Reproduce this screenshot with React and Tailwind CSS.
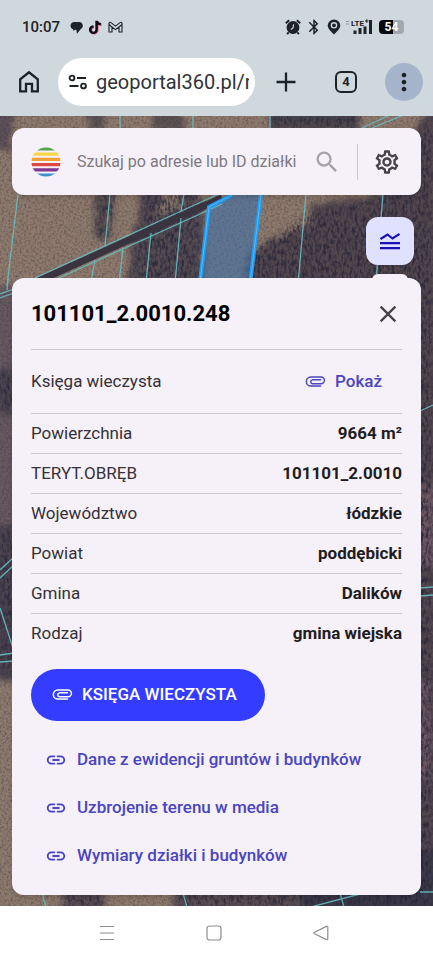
import { useState } from "react";
import { MdBluetooth, MdClose, MdLink, MdMoreVert, MdOutlineSettings, MdSearch } from "react-icons/md";

const details = [
  { label: "Powierzchnia", value: "9664 m²" },
  { label: "TERYT.OBRĘB", value: "101101_2.0010" },
  { label: "Województwo", value: "łódzkie" },
  { label: "Powiat", value: "poddębicki" },
  { label: "Gmina", value: "Dalików" },
  { label: "Rodzaj", value: "gmina wiejska" },
];

const links = [
  "Dane z ewidencji gruntów i budynków",
  "Uzbrojenie terenu w media",
  "Wymiary działki i budynków",
];

function ClipIcon() {
  return (
    <svg viewBox="0 0 22 12" className="h-[11px] w-[21px] shrink-0" fill="none" stroke="currentColor" strokeWidth="1.6" strokeLinecap="round">
      <path d="M16.500 11H6A5 5 0 0 1 6 1H17a3.700 3.700 0 0 1 0 7.500H7.500a2.200 2.200 0 0 1 0-4.300H16.500" />
    </svg>
  );
}

function StatusBar() {
  return (
    <div className="flex h-[54px] items-center justify-between pl-[22px] pr-[29px] text-[#1d2226]">
      <div className="flex items-center gap-1.5">
        <span className="mr-1 text-[15px] font-medium">10:07</span>
        <svg viewBox="0 0 12 12" className="h-[13px] w-[13px]" fill="currentColor">
          <path d="M3.400 1h5A3.400 3.400 0 0 1 9.800 7.500L6.400 11.700 5.900 8H4.600L3.200 9.200 3 7.800A3.500 3.500 0 0 1 3.400 1z" />
        </svg>
        <svg viewBox="0 0 12 14" className="h-[15px] w-[13px]" fill="none" strokeWidth="2.3">
          <path d="M7.700 1v8.400a3 3 0 1 1-3-3M7.700 1.200c.4 2.100 1.700 3 4 3.200" stroke="#e5587b" />
          <path d="M7 .6V9a3 3 0 1 1-3-3M7 .8c.4 2.100 1.700 3 4 3.200" stroke="#080c10" />
        </svg>
        <svg viewBox="0 0 15 12" className="h-3 w-[15px]" fill="none" stroke="currentColor" strokeWidth="1.100" strokeLinejoin="round">
          <path d="M1 11V2.100Q1.500.7 3 1.600l4.500 3.500L12 1.600q1.500-.9 2 .5V11h-3V6L7.500 8.600 4 6v5zM4 6 1 3.500M11 6l3-2.500" />
        </svg>
      </div>
      <div className="flex items-center gap-1">
        <svg viewBox="0 0 16 16" className="h-4 w-4" fill="none" stroke="currentColor">
          <circle cx="8" cy="8.500" r="6.400" fill="currentColor" stroke="none" />
          <path d="M.8 4.200 4.200 1.200M11.800 1.200l3.400 3M3.700 13.300l-1.600 1.900M12.300 13.300l1.600 1.900" strokeWidth="1.900" />
          <path d="M8.600 5.300 8 9 5.800 10.500" stroke="#cfd8dd" strokeWidth="1.200" />
        </svg>
        <MdBluetooth className="h-[18px] w-[18px]" />
        <svg viewBox="0 0 14 16" className="h-4 w-3.5">
          <path d="M7 .4A6.300 6.300 0 0 0 .7 6.500C.7 10 7 15.500 7 15.500s6.300-5.500 6.300-9A6.300 6.300 0 0 0 7 .4z" fill="currentColor" />
          <circle cx="7" cy="6.300" r="2.600" fill="none" stroke="#cfd8dd" strokeWidth="1.400" />
        </svg>
        <svg viewBox="0 0 28 18" className="h-[18px] w-7" fill="currentColor">
          <path d="M1 3h3v1H1zM1 5.500h3v1H1z" opacity=".35" />
          <text x="6" y="7.500" fontSize="8" fontWeight="700" fontFamily="Roboto, sans-serif">LTE</text>
          <path d="M20 2.500h3.500v1H20zM21.300 1.200h1v3.500h-1zM8.500 12.500h3V16h-3zM13.500 10h3v6h-3zM18.500 8.500h3V16h-3zM24 2h3v14h-3z" />
        </svg>
        <span className="ml-0.5 flex h-3.5 w-[25px] items-center justify-center rounded bg-linear-to-r from-[#080b0e] from-55% to-[#a1a9af] to-55% text-[12px] font-bold text-white">
          54
        </span>
      </div>
    </div>
  );
}

function BrowserBar() {
  return (
    <div className="flex items-center pb-2.5 pl-[17px] pr-2.5 pt-1 text-[#1d2226]">
      <button aria-label="Strona główna" className="mr-[17px]">
        <svg viewBox="0 0 24 24" className="h-6 w-6" fill="none" stroke="currentColor" strokeWidth="2.300">
          <path d="M3.200 21.300V9.300L12 2.300l8.800 7v12H15v-7.500H9v7.500z" />
        </svg>
      </button>
      <div className="flex h-12 min-w-0 flex-1 items-center gap-2 rounded-full bg-white pl-2.5 pr-1.5">
        <svg viewBox="0 0 20 16" className="h-4 w-5 shrink-0" fill="none" stroke="currentColor" strokeWidth="1.900">
          <circle cx="4" cy="4" r="2.400" />
          <path d="M9 4h9M1.500 12h9" />
          <circle cx="15.500" cy="12" r="2.400" />
        </svg>
        <input
          aria-label="Adres strony"
          defaultValue="geoportal360.pl/r"
          className="w-full min-w-0 flex-1 bg-transparent text-[20px] text-[#303236] outline-none"
        />
      </div>
      <button aria-label="Nowa karta" className="ml-[15px] flex w-8 justify-center">
        <svg viewBox="0 0 20 20" className="h-5 w-5" stroke="currentColor" strokeWidth="2.300">
          <path d="M10 .500v19M.500 10h19" />
        </svg>
      </button>
      <button aria-label="Karty" className="ml-7 flex w-8 justify-center">
        <span className="flex h-[22px] w-[22px] items-center justify-center rounded-md border-2 border-[#1d2226] text-[13px] font-bold">4</span>
      </button>
      <button aria-label="Menu" className="ml-[23px] flex h-[38px] w-[38px] items-center justify-center rounded-full bg-[#a5b3cb]">
        <MdMoreVert className="h-7 w-7" />
      </button>
    </div>
  );
}

function MapView() {
  return (
    <svg viewBox="0 116 433 790" preserveAspectRatio="xMidYMin slice" className="absolute inset-0 h-full w-full">
      <defs>
        <filter id="soften" x="-10%" y="-10%" width="120%" height="120%" colorInterpolationFilters="sRGB">
          <feTurbulence type="fractalNoise" baseFrequency="0.2" numOctaves="2" seed="8" result="n" />
          <feDisplacementMap in="SourceGraphic" in2="n" scale="16" xChannelSelector="R" yChannelSelector="G" />
          <feGaussianBlur stdDeviation="2.500" />
        </filter>
        <filter id="grain" x="0" y="0" width="100%" height="100%" colorInterpolationFilters="sRGB">
          <feTurbulence type="fractalNoise" baseFrequency="0.45" numOctaves="3" seed="3" />
          <feColorMatrix values="0 0 0 0 .2  0 0 0 0 .17  0 0 0 0 .23  1.500 0 0 0 -.6" />
        </filter>
        <filter id="trees" x="-5%" y="-5%" width="110%" height="110%" colorInterpolationFilters="sRGB">
          <feGaussianBlur in="SourceAlpha" stdDeviation="4" result="soft" />
          <feTurbulence type="fractalNoise" baseFrequency="0.38 0.18" numOctaves="3" seed="12" result="t" />
          <feColorMatrix in="t" values="0 0 0 0 .13  0 0 0 0 .13  0 0 0 0 .21  3 0 0 0 -1.200" result="c" />
          <feComposite in="c" in2="soft" operator="in" />
        </filter>
      </defs>
      <rect y="116" width="433" height="790" fill="#8f7b6d" />
      <g filter="url(#soften)">
        <path d="M-10 100h26l-5 50h-21z" fill="#5c5157" />
        <path d="M85 100h20v30H90zM152 100h28l5 30h-33z" fill="#5a5153" />
        <path d="M270 100h88v30h-88z" fill="#4d474c" />
        <path d="M95 190h20l-7 52-13-5z" fill="#5c5253" />
        <path d="M142 190h22l-8 30-20 10zM183 190h20l-8 12-14 4zM134 225l70-27 0 90h-77z" fill="#564d54" />
        <path d="M310 205l70-10 20-38 22-40 30-17v830H410V300H240l12-48 20-12 40-18z" fill="#55494f" />
        <path d="M-10 285h28v245h-28z" fill="#675960" />
        <path d="M-10 525h26v155h-26zM-5 370h20v45H0z" fill="#4c4550" />
        <path d="M62 885h42v30H62zM175 885h125v30H175z" fill="#5c5155" />
        <path d="M300 885h150v30H300zM415 850h30v60h-30z" fill="#3d3b4a" />
        <path d="M415 485h22v80h-22zM415 680h16v100h-16z" fill="#705a63" />
      </g>
      <path
        d="M96 194h20l-7 48-13-5zM142 194h60l-5 88h-68l12-58zM272 116h88v12h-88zM312 212l68-14 20-40 33-45v793H175v-14h235V285H242l8-34 22-12zM0 530h14v140H0zM0 370h14v40H0zM62 893h42v14H62z"
        filter="url(#trees)"
        opacity=".75"
      />
      <rect y="116" width="433" height="790" filter="url(#grain)" opacity=".6" />
      <path d="M36 282 222 198" stroke="#393440" strokeWidth="7" />
      <path d="M208 207 260 180 249 282H200z" fill="#3b71ad" fillOpacity=".55" />
      <g fill="none" stroke="#68bdc0" strokeWidth="1.300" opacity=".9">
        <path d="M35 278 225 191M50 282 222 204M120 116v15M193 116v15M270 116v15M362 128l30-14M372 128l34-14" />
        <path d="m18 194-11 92M110 194l-5 52M184 194l-3 18M95 260l-4 22M123 248l-4 35M151 233l-5 50M181 218l-6 65M306 194l-8 90M383 194l-7 88" />
        <path d="m8 278-1 12M0 294l14-5M0 298l14-5M0 570l14-13M0 578l14-13M0 608l14 43M0 655l14-2M0 662l14-1M42 893l4 14M183 893l4 14M307 908l53-14M340 893l4 14M420 411l13-6M420 588l13-1M420 596l13-1M420 892h13" />
      </g>
      <path d="M200 282 209 207 232 195M250 284l11-90" fill="none" stroke="#209df4" strokeWidth="4" />
      <path d="M200 282 209 207 232 195M250 284l11-90" fill="none" stroke="#56b9f7" strokeWidth="1" />
    </svg>
  );
}

function Logo() {
  return (
    <svg viewBox="0 0 30 30" className="h-[30px] w-[30px] shrink-0">
      <defs>
        <clipPath id="disc">
          <circle cx="15" cy="15" r="14.500" />
        </clipPath>
      </defs>
      <g clipPath="url(#disc)">
        <path fill="#55a34a" d="M0 0h30v3.500H0z" />
        <path fill="#f8d847" d="M0 5.500h30v3.200H0z" />
        <path fill="#f2a13b" d="M0 10.700h30v3.300H0z" />
        <path fill="#dd4842" d="M0 16h30v3.200H0z" />
        <path fill="#813790" d="M0 21.200h30v3.200H0z" />
        <path fill="#3b91cb" d="M0 26.500h30V30H0z" />
      </g>
    </svg>
  );
}

function SearchCard() {
  return (
    <div className="flex h-[67px] items-center rounded-xl bg-[#f6f0f8] pl-[19px] pr-5 shadow-md">
      <Logo />
      <input
        type="search"
        aria-label="Szukaj"
        placeholder="Szukaj po adresie lub ID działki"
        className="ml-4 min-w-0 flex-1 bg-transparent text-[16px] outline-none placeholder:text-[#7d797f]"
      />
      <button aria-label="Szukaj" className="text-[#a5a1a7]">
        <MdSearch className="h-7 w-7" />
      </button>
      <span className="ml-4 h-9 w-px bg-[#cbc7ce]" />
      <button aria-label="Ustawienia" className="ml-[15px] text-[#454348]">
        <MdOutlineSettings className="h-7 w-7" />
      </button>
    </div>
  );
}

function ParcelPanel({ onClose }) {
  return (
    <section className="relative rounded-xl bg-[#f6f0f8] px-[19px] pb-[15px] shadow-md">
      <div className="flex h-[71px] items-center justify-between">
        <h1 className="text-[22px] font-bold text-black">101101_2.0010.248</h1>
        <button aria-label="Zamknij" onClick={onClose} className="text-[#454348]">
          <MdClose className="h-7 w-7" />
        </button>
      </div>

      <div className="flex h-16 items-center justify-between border-t border-[#cdc8cf] pr-5">
        <span className="text-[17px] text-[#343137]">Księga wieczysta</span>
        <button className="flex items-center gap-[9px] text-[17px] font-medium text-[#4946bf]">
          <ClipIcon />
          Pokaż
        </button>
      </div>

      <table className="w-full text-[17px]">
        <tbody>
          {details.map((row) => (
            <tr key={row.label} className="h-10 border-t border-[#cdc8cf]">
              <th scope="row" className="text-left font-normal text-[#343137]">{row.label}</th>
              <td className="text-right font-bold text-[#1f1d21]">{row.value}</td>
            </tr>
          ))}
        </tbody>
      </table>

      <button className="mt-[15px] flex h-[52px] items-center gap-[9px] rounded-full bg-[#343dff] pl-[21px] pr-7 text-[17px] font-medium text-white">
        <ClipIcon />
        KSIĘGA WIECZYSTA
      </button>

      <ul className="mt-[15px] pl-3.5">
        {links.map((text) => (
          <li key={text}>
            <a href="#" className="flex h-12 items-center gap-2.5 text-[17px] font-medium text-[#4946bf]">
              <MdLink className="h-[22px] w-[22px] shrink-0" />
              {text}
            </a>
          </li>
        ))}
      </ul>
    </section>
  );
}

function SystemNav() {
  return (
    <nav className="flex h-[54px] items-center justify-center gap-[87px] bg-white pr-1.5 text-[#8d8d8d]">
      <button aria-label="Ostatnie">
        <svg viewBox="0 0 20 20" className="h-5 w-5" stroke="currentColor" strokeWidth="1.200">
          <path d="M3 3.500h14M3 10h14M3 16.500h14" />
        </svg>
      </button>
      <button aria-label="Ekran główny">
        <svg viewBox="0 0 20 20" className="h-5 w-5" fill="none" stroke="currentColor" strokeWidth="1.200">
          <rect x="3" y="3" width="14" height="14" rx="2.500" />
        </svg>
      </button>
      <button aria-label="Wstecz">
        <svg viewBox="0 0 20 20" className="h-5 w-5" fill="none" stroke="currentColor" strokeWidth="1.200" strokeLinejoin="round">
          <path d="M3.500 9.300 15.500 3.400q1.300-.5 1.300.8v11.600q0 1.300-1.300.8L3.500 10.700q-1.200-.7 0-1.400z" />
        </svg>
      </button>
    </nav>
  );
}

export default function App() {
  const [open, setOpen] = useState(true);

  return (
    <div className="flex min-h-screen flex-col font-[Roboto,sans-serif]">
      <header className="bg-[#cfd8dd]">
        <StatusBar />
        <BrowserBar />
      </header>

      <main className="relative flex-1 overflow-hidden">
        <MapView />
        <div className="relative flex flex-col px-3 pb-[11px] pt-3">
          <SearchCard />
          <div className="relative mb-[13px] mr-[7px] mt-[22px] self-end">
            <button aria-label="Warstwy" className="flex h-12 w-12 items-center justify-center rounded-xl bg-[#e0e0ff] text-[#1a12b8] shadow">
              <svg viewBox="0 0 20 18" className="h-[18px] w-5" fill="none" stroke="currentColor" strokeWidth="2.200">
                <path d="M.500 7 7.500 2.500l5 4L19.500 2M0 11.200h20M0 16.200h20" />
              </svg>
            </button>
            {/* next map control, mostly hidden under the panel */}
            <span className="absolute left-1.5 top-[57px] h-9 w-9 rounded-md bg-[#f6f0f8]" />
          </div>
          {open && <ParcelPanel onClose={() => setOpen(false)} />}
        </div>
      </main>

      <SystemNav />
    </div>
  );
}
